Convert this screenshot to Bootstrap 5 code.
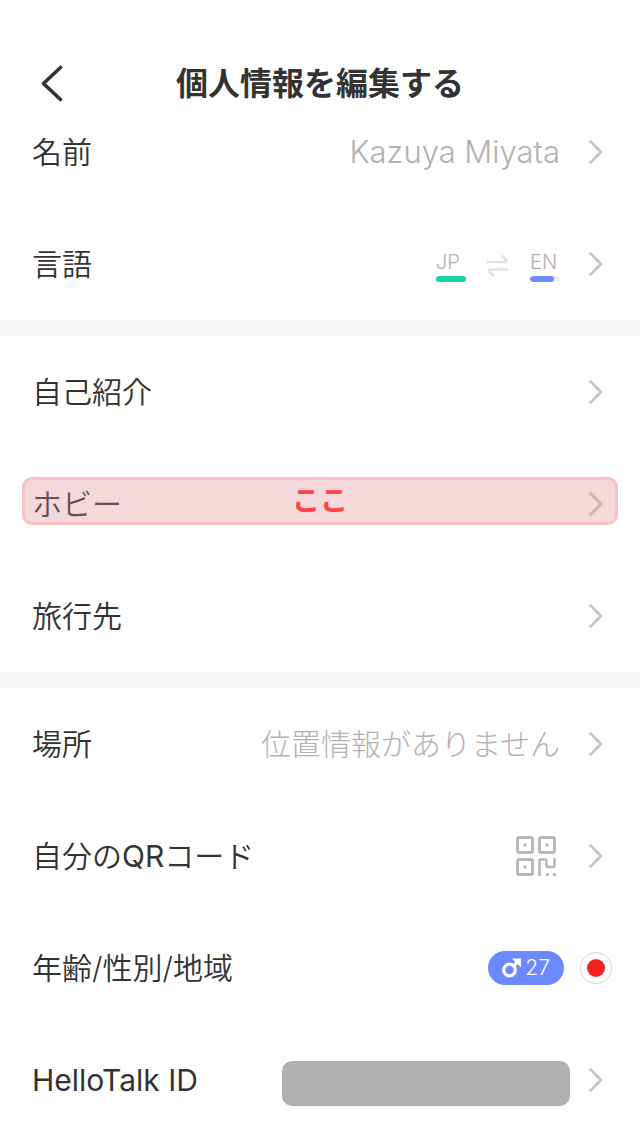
<!DOCTYPE html>
<html lang="ja">
<head>
<meta charset="utf-8">
<meta name="viewport" content="width=device-width, initial-scale=1">
<title>個人情報を編集する</title>
<link href="https://cdn.jsdelivr.net/npm/bootstrap@5.3.0/dist/css/bootstrap.min.css" rel="stylesheet">
<style>
  body { font-family: Inter, "Noto Sans CJK JP", sans-serif; color: #333; background: #fff; }
  .app-header { padding: 66px 40px 0; margin-bottom: -6px; }
  .app-title { font-size: 32px; line-height: 36px; font-weight: 700; }
  .back-btn { width: 24px; height: 34px; }
  .setting-row { height: 112px; padding: 0 36px 0 32px; gap: 28px; color: #333; font-size: 30px; line-height: 40px; }
  .setting-label { font-weight: 350; }
  .setting-label .latin, .latin-label { font-weight: 400; }
  .setting-value { color: #b2b2b2; font-weight: 300; }
  .latin-value { font-size: 31px; }
  .chevron { color: #c6c6c6; }
  .divider-band { height: 16px; background: #f6f8f8; }
  .lang { width: 30px; font-size: 20px; line-height: 24px; font-weight: 300; color: #b0b0b0; }
  .lang-bar { height: 6px; background: #eee; margin-top: 2px; }
  .bar-native { background: #1bd2a9; }
  .bar-learn { background: #6c8aff; }
  .callout-box { inset: 29px 22px 35px; border: 3px solid rgba(255, 140, 148, .28); border-radius: 10px;
    background: rgba(224, 133, 136, .32); color: #ff4343; font-size: 28px; line-height: 40px; font-weight: 700; }
  .age-pill { height: 34px; padding: 0 14px; gap: 3px; background: #6c8aff; font-size: 21px; font-weight: 300; }
  .flag { width: 32px; height: 32px; border: 1px solid #d4d4d4; }
  .flag-dot { width: 18px; height: 18px; background: #f22222; }
  .row-flag { padding-right: 28px; gap: 16px; }
  .masked-id { right: 70px; top: 37px; width: 45%; height: 45px; border-radius: 10px; background: #b0b0b0; }
</style>
</head>
<body>
<svg class="d-none" aria-hidden="true">
  <symbol id="chev" viewBox="0 0 16 26"><path d="M2.500 2.500 13 13 2.500 23.500" fill="none" stroke="currentColor" stroke-width="2.800" stroke-linecap="round" stroke-linejoin="round"/></symbol>
</svg>

<header class="app-header d-flex align-items-center justify-content-between">
  <button type="button" class="back-btn btn p-0 border-0 d-flex" aria-label="戻る">
    <svg width="24" height="34" viewBox="0 0 24 34" overflow="visible"><path d="M20.500 .5 3.500 16.500 20.500 32.500" fill="none" stroke="#333" stroke-width="3.600" stroke-linecap="round" stroke-linejoin="round"/></svg>
  </button>
  <h1 class="app-title m-0 text-nowrap">個人情報を編集する</h1>
  <span class="back-btn"></span>
</header>

<main>
  <section>
    <a href="#name" class="setting-row d-flex align-items-center text-decoration-none">
      <span class="setting-label me-auto">名前</span>
      <span class="setting-value latin-value">Kazuya Miyata</span>
      <svg class="chevron" width="16" height="26"><use href="#chev"/></svg>
    </a>
    <a href="#language" class="setting-row d-flex align-items-center text-decoration-none">
      <span class="setting-label me-auto">言語</span>
      <span class="d-flex align-items-center">
        <span class="lang pt-1">JP<span class="lang-bar bar-native d-block rounded-pill"></span></span>
        <svg class="mx-3" width="32" height="24" viewBox="0 0 32 24" fill="none" stroke="#e3e3e3" stroke-width="2.600"><path d="M5 10H25M20 3.500 25.500 9.500M26 17.500H6M6 18l5.500 6"/></svg>
        <span class="lang pt-1">EN<span class="lang-bar d-block rounded-pill overflow-hidden"><span class="bar-learn d-block h-100 rounded-pill" style="width:80%"></span></span></span>
      </span>
      <svg class="chevron" width="16" height="26"><use href="#chev"/></svg>
    </a>
  </section>
  <div class="divider-band"></div>
  <section>
    <a href="#intro" class="setting-row d-flex align-items-center text-decoration-none">
      <span class="setting-label me-auto">自己紹介</span>
      <svg class="chevron" width="16" height="26"><use href="#chev"/></svg>
    </a>
    <div class="position-relative">
      <a href="#hobby" class="setting-row d-flex align-items-center text-decoration-none">
        <span class="setting-label me-auto">ホビー</span>
        <svg class="chevron" width="16" height="26"><use href="#chev"/></svg>
      </a>
      <div class="callout-box position-absolute d-flex align-items-center justify-content-center pe-none">ここ</div>
    </div>
    <a href="#travel" class="setting-row d-flex align-items-center text-decoration-none">
      <span class="setting-label me-auto">旅行先</span>
      <svg class="chevron" width="16" height="26"><use href="#chev"/></svg>
    </a>
  </section>
  <div class="divider-band"></div>
  <section>
    <a href="#place" class="setting-row d-flex align-items-center text-decoration-none">
      <span class="setting-label me-auto">場所</span>
      <span class="setting-value">位置情報がありません</span>
      <svg class="chevron" width="16" height="26"><use href="#chev"/></svg>
    </a>
    <a href="#qr" class="setting-row d-flex align-items-center text-decoration-none">
      <span class="setting-label me-auto">自分の<span class="latin">QR</span>コード</span>
      <svg width="44" height="40" viewBox="0 0 44 40" fill="none" stroke="#b8b8b8" stroke-width="3">
        <rect x="1.500" y="1.500" width="15" height="15" rx="2"/>
        <rect x="23.500" y="1.500" width="15" height="15" rx="2"/>
        <rect x="1.500" y="23.500" width="15" height="15" rx="2"/>
        <path stroke-width="2.600" d="M23.500 40V25q0-1.500 1.500-1.500h4q1.500 0 1.500 1.500v4.500q0 1.500 1.500 1.500h5q1.500 0 1.500-1.500V22"/>
        <path stroke="none" fill="#b8b8b8" d="M7.500 7.500h3v3h-3zM29.500 7.500h3v3h-3zM7.500 29.500h3v3h-3zM30 37h3v3h-3zM37 37h3v3h-3z"/>
      </svg>
      <svg class="chevron" width="16" height="26"><use href="#chev"/></svg>
    </a>
    <a href="#profile" class="setting-row row-flag d-flex align-items-center text-decoration-none">
      <span class="setting-label me-auto">年齢/性別/地域</span>
      <span class="age-pill rounded-pill text-white d-flex align-items-center">
        <svg width="20" height="20" viewBox="0 0 20 20" fill="none" stroke="#fff" stroke-width="3.200"><circle cx="7.500" cy="12" r="5.800"/><path d="M11.500 8 16 3.500"/><path d="M10 .5H19V9.500L16 6.500 13 3.500z" fill="#fff" stroke="none"/></svg>
        27
      </span>
      <span class="flag rounded-circle d-flex align-items-center justify-content-center" role="img" aria-label="日本"><span class="flag-dot rounded-circle"></span></span>
    </a>
    <div class="position-relative">
      <a href="#id" class="setting-row d-flex align-items-center text-decoration-none">
        <span class="setting-label latin-label me-auto">HelloTalk ID</span>
        <svg class="chevron" width="16" height="26"><use href="#chev"/></svg>
      </a>
      <div class="masked-id position-absolute"></div>
    </div>
  </section>
</main>
<script src="https://cdn.jsdelivr.net/npm/bootstrap@5.3.0/dist/js/bootstrap.bundle.min.js"></script>
</body>
</html>
